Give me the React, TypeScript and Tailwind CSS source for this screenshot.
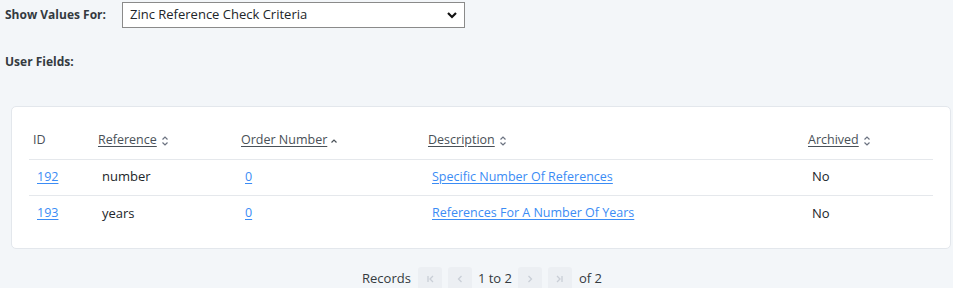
import React from "react";

const font = { fontFamily: '"Open Sans", "Liberation Sans", sans-serif' };

const SortBoth = () => (
  <svg width="8" height="12" viewBox="0 0 8 12" className="ml-[4px] inline-block text-[#6b7280]">
    <path d="M1.5 4.5 L4 2 L6.5 4.5" fill="none" stroke="currentColor" strokeWidth="1.2" />
    <path d="M1.5 7.5 L4 10 L6.5 7.5" fill="none" stroke="currentColor" strokeWidth="1.2" />
  </svg>
);

const SortUp = () => (
  <svg width="8" height="12" viewBox="0 0 8 12" className="ml-[3px] inline-block text-[#495057]">
    <path d="M1.5 7.5 L4 5 L6.5 7.5" fill="none" stroke="currentColor" strokeWidth="1.2" />
  </svg>
);

const PageBtn = ({ d }: { d: string }) => (
  <button className="flex h-[24px] w-[24px] items-center justify-center rounded-[3px] bg-[#eceff3]">
    <svg width="10" height="10" viewBox="0 0 10 10">
      <path d={d} fill="none" stroke="#c9ced6" strokeWidth="1.3" />
    </svg>
  </button>
);

const rows = [
  { id: "192", ref: "number", order: "0", desc: "Specific Number Of References", archived: "No" },
  { id: "193", ref: "years", order: "0", desc: "References For A Number Of Years", archived: "No" },
];

export default function App() {
  return (
    <div className="min-h-[288px] bg-[#f3f6f9] text-[13px] text-[#212529]" style={font}>
      <div className="flex items-center pl-[5px] pt-[2px]">
        <span className="w-[117px] text-[12px] font-bold text-[#343a40]">Show Values For:</span>
        <div className="flex h-[26px] w-[343px] items-center justify-between border border-[#8a8a8a] bg-white pl-[7px] pr-[6px]">
          <span>Zinc Reference Check Criteria</span>
          <svg width="12" height="10" viewBox="0 0 12 10">
            <path d="M2 3 L6 7 L10 3" fill="none" stroke="#111" strokeWidth="2.2" />
          </svg>
        </div>
      </div>
      <div className="pl-[5px] pt-[25px] text-[12px] font-bold text-[#343a40]">User Fields:</div>

      <div className="ml-[11px] mr-[2px] mt-[35px] rounded-[5px] border border-[#e3e7ec] bg-white px-[17px] pb-[17px] pt-[16px]">
        <table className="w-full border-collapse text-[12.5px]">
          <colgroup>
            <col className="w-[65px]" />
            <col className="w-[143px]" />
            <col className="w-[187px]" />
            <col className="w-[380px]" />
            <col />
          </colgroup>
          <thead>
            <tr className="h-[36px] border-b border-[#e5e8ec] text-left text-[#495057]">
              <th className="pl-[4px] font-normal">ID</th>
              <th className="pl-[4px] font-normal">
                <span className="underline underline-offset-2">Reference</span>
                <SortBoth />
              </th>
              <th className="pl-[4px] font-normal">
                <span className="underline underline-offset-2">Order Number</span>
                <SortUp />
              </th>
              <th className="pl-[4px] font-normal">
                <span className="underline underline-offset-2">Description</span>
                <SortBoth />
              </th>
              <th className="pl-[4px] font-normal">
                <span className="underline underline-offset-2">Archived</span>
                <SortBoth />
              </th>
            </tr>
          </thead>
          <tbody>
            {rows.map((r, i) => (
              <tr key={r.id} className={i === 0 ? "h-[36px] border-b border-[#e5e8ec]" : "h-[36px]"}>
                <td className="pl-[8px]">
                  <a href="#" className="text-[#3b8cf5] underline underline-offset-2">{r.id}</a>
                </td>
                <td className="pl-[8px] text-[13px]">{r.ref}</td>
                <td className="pl-[8px]">
                  <a href="#" className="text-[#3b8cf5] underline underline-offset-2">{r.order}</a>
                </td>
                <td className="pl-[8px]">
                  <a href="#" className="text-[#3b8cf5] underline underline-offset-2">{r.desc}</a>
                </td>
                <td className="pl-[8px] text-[13px]">{r.archived}</td>
              </tr>
            ))}
          </tbody>
        </table>
      </div>

      <div className="mt-[18px] flex items-center justify-center gap-[6px] pl-[11px] text-[13px] text-[#343a40]">
        <span className="mr-[1px]">Records</span>
        <PageBtn d="M3 2 V8 M8 2 L5 5 L8 8" />
        <PageBtn d="M6.5 2 L3.5 5 L6.5 8" />
        <span>1 to 2</span>
        <PageBtn d="M3.5 2 L6.5 5 L3.5 8" />
        <PageBtn d="M7 2 V8 M2 2 L5 5 L2 8" />
        <span className="ml-[1px]">of 2</span>
      </div>
    </div>
  );
}
